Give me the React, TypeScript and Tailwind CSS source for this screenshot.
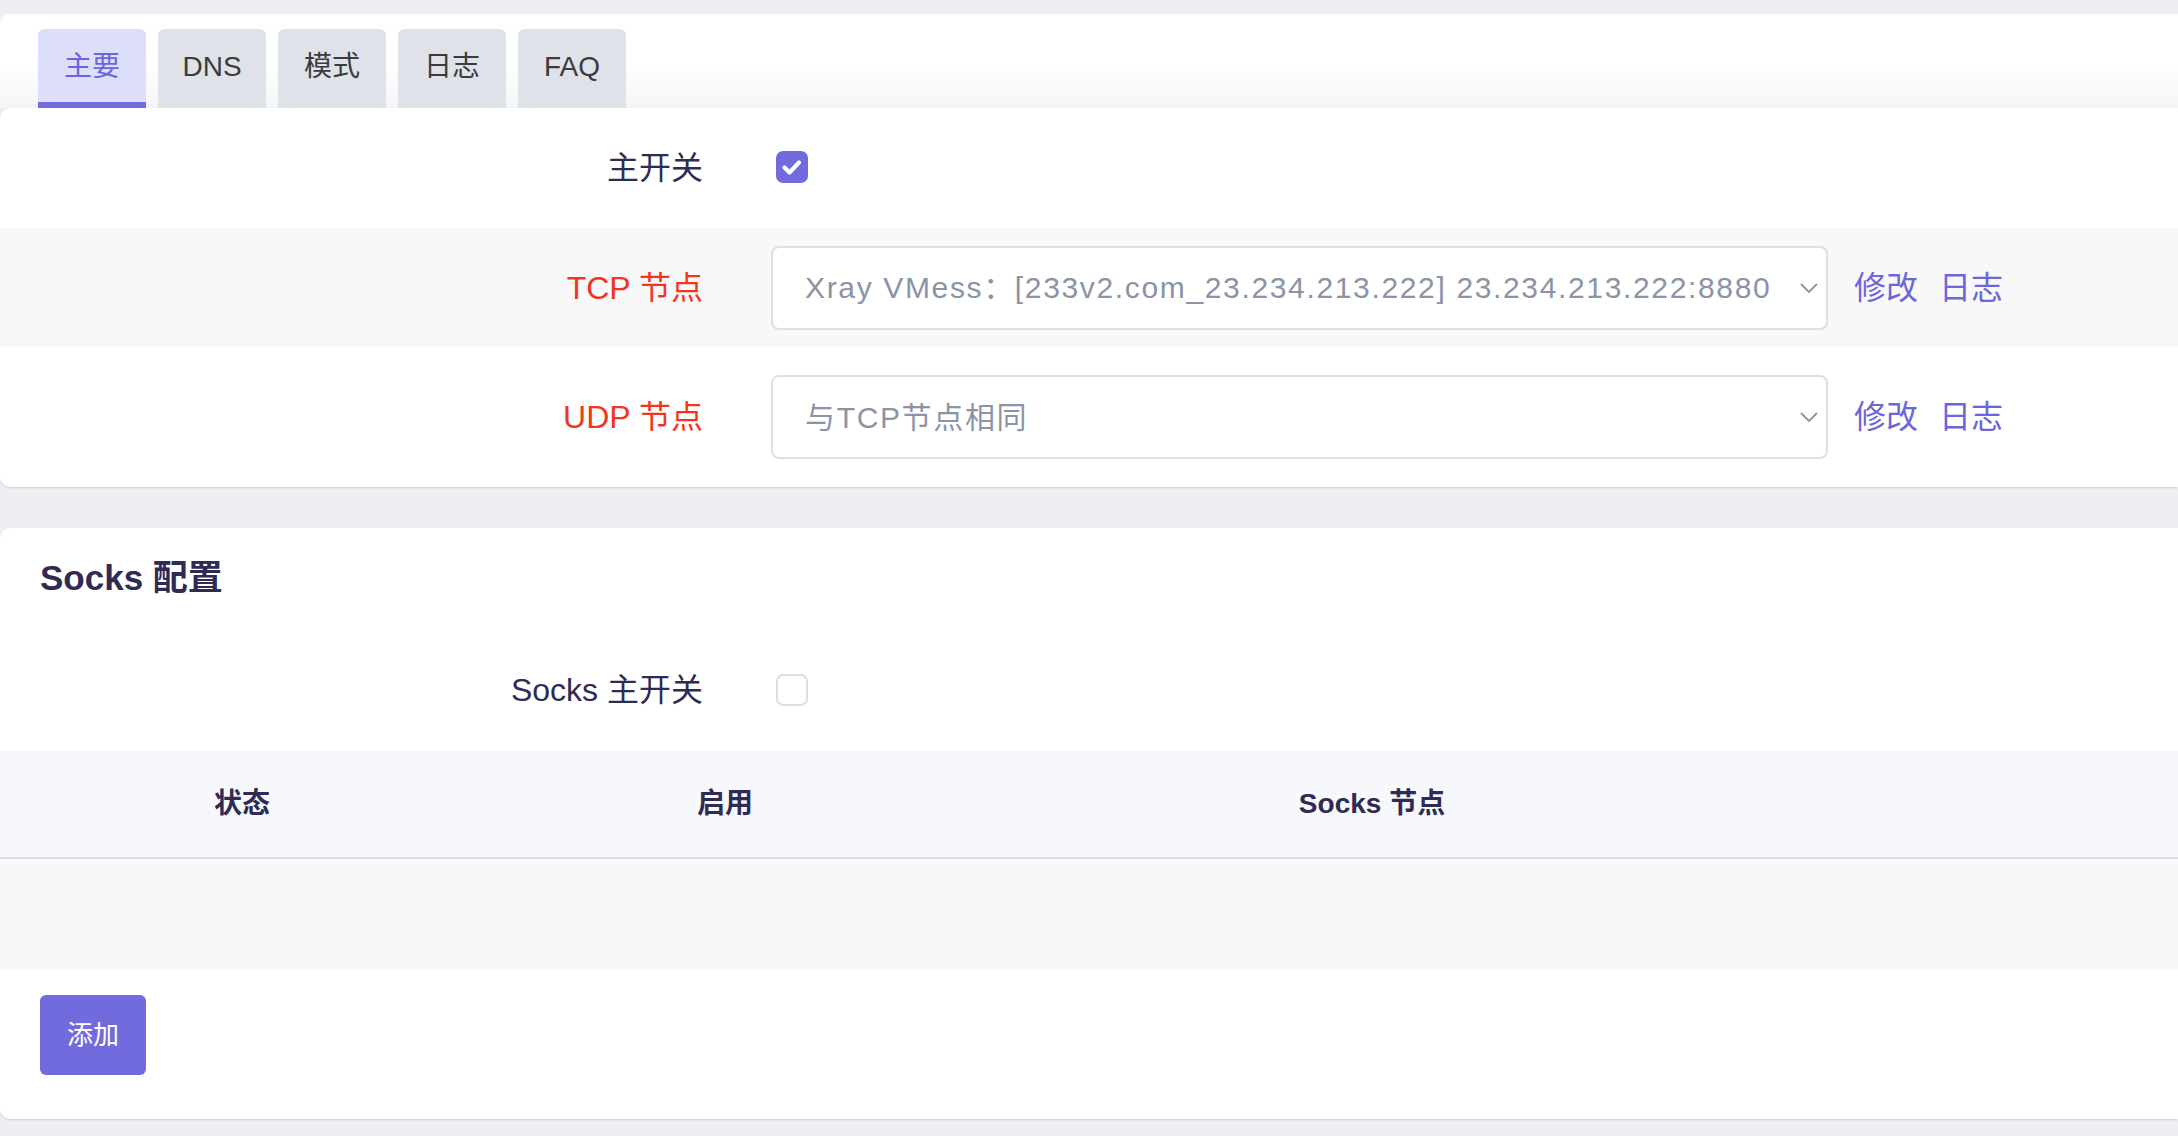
import React from 'react';

const font = "font-['Liberation_Sans','Noto_Sans_CJK_SC',sans-serif]";

function Tab({ label, active }: { label: string; active?: boolean }) {
  return (
    <div
      className={`flex h-[79px] w-[108px] items-center justify-center rounded-t-[6px] border-b-[6px] pt-[2px] text-[28px] ${
        active
          ? 'border-[#716bde] bg-[#dddffa] text-[#6c64dc]'
          : 'border-transparent bg-[#dfe2e8] text-[#3b3b3b]'
      }`}
    >
      {label}
    </div>
  );
}

function Checkbox({ checked }: { checked?: boolean }) {
  return checked ? (
    <div className="ml-[5px] flex h-[32px] w-[32px] items-center justify-center rounded-[7px] bg-[#716bde]">
      <svg width="32" height="32" viewBox="0 0 32 32" fill="none">
        <path d="M8.5 16.5l5 5 9.5-10" stroke="white" strokeWidth="4.2" strokeLinecap="round" strokeLinejoin="round" />
      </svg>
    </div>
  ) : (
    <div className="ml-[5px] h-[32px] w-[32px] rounded-[7px] border-2 border-[#dcdfe6] bg-white" />
  );
}

function Select({ value }: { value: string }) {
  return (
    <div className="flex h-[84px] w-[1057px] items-center justify-between rounded-[8px] border-2 border-[#dcdfe6] bg-white pl-[32px] pr-[8px]">
      <span className="text-[30px] tracking-[1.65px] text-[#8a94a6] whitespace-nowrap">{value}</span>
      <svg width="18" height="10" viewBox="0 0 18 10" fill="none">
        <path d="M1 1l8 8 8-8" stroke="#8a94a6" strokeWidth="1.8" />
      </svg>
    </div>
  );
}

function Row({
  label,
  red,
  gray,
  height,
  children,
}: {
  label: string;
  red?: boolean;
  gray?: boolean;
  height: string;
  children: React.ReactNode;
}) {
  return (
    <div className={`flex items-center ${height} ${gray ? 'bg-[#f8f8f8]' : ''}`}>
      <div className={`w-[703px] text-right text-[32px] ${red ? 'text-[#f5341c]' : 'text-[#2f2b55]'}`}>{label}</div>
      <div className="ml-[68px] flex items-center">{children}</div>
    </div>
  );
}

function Links() {
  return (
    <div className="ml-[26px] flex gap-[21px] text-[32px] text-[#6d65dd]">
      <span>修改</span>
      <span>日志</span>
    </div>
  );
}

export default function App() {
  return (
    <div className={`min-h-screen w-full overflow-hidden bg-[#edeff2] pt-[14px] ${font}`}>
      <div className="flex h-[94px] items-end gap-[12px] rounded-tl-[10px] bg-gradient-to-b from-white via-white to-[#f4f5f7] pl-[38px]">
        <Tab label="主要" active />
        <Tab label="DNS" />
        <Tab label="模式" />
        <Tab label="日志" />
        <Tab label="FAQ" />
      </div>

      <div className="rounded-l-[10px] bg-white shadow-sm">
        <Row label="主开关" height="h-[120px]">
          <div className="-mt-[3px]">
            <Checkbox checked />
          </div>
        </Row>
        <Row label="TCP 节点" red gray height="h-[119px]">
          <Select value="Xray VMess：[233v2.com_23.234.213.222] 23.234.213.222:8880" />
          <Links />
        </Row>
        <Row label="UDP 节点" red height="h-[140px]">
          <Select value="与TCP节点相同" />
          <Links />
        </Row>
      </div>

      <div className="mt-[41px] rounded-l-[10px] bg-white pb-[44px] shadow-sm">
        <div className="h-[100px] pl-[40px] pt-[30px] text-[35px] font-bold leading-[40px] text-[#2f2b55]">Socks 配置</div>
        <div className="flex h-[123px] items-center">
          <div className="w-[703px] text-right text-[32px] text-[#2f2b55]">Socks 主开关</div>
          <div className="ml-[68px]">
            <Checkbox />
          </div>
        </div>
        <div className="grid h-[108px] grid-cols-[484px_482px_812px_1fr] items-center border-b-2 border-[#dedede] bg-[#f7f8fc] text-[28px] font-bold text-[#2f2b55]">
          <div className="text-center">状态</div>
          <div className="text-center">启用</div>
          <div className="text-center">Socks 节点</div>
          <div />
        </div>
        <div className="h-[111px] bg-[#f8f8f8]" />
        <div className="pl-[40px] pt-[25px]">
          <button className="h-[80px] w-[106px] rounded-[6px] bg-[#716bde] text-[26px] text-white">添加</button>
        </div>
      </div>
    </div>
  );
}
